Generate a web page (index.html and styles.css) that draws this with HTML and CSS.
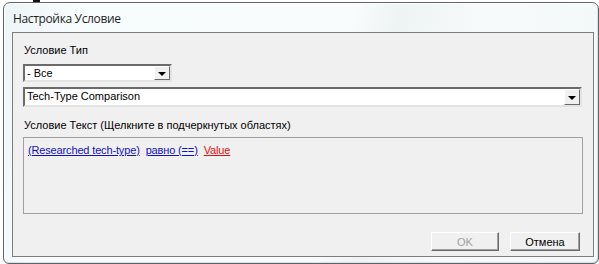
FILE: index.html
```html
<!DOCTYPE html>
<html>
<head>
<meta charset="utf-8">
<link rel="stylesheet" href="styles.css">
</head>
<body>
<div class="mark"></div>
<div class="window">
  <div class="titlebar">Настройка Условие</div>
  <div class="client">
    <div class="label label-type">Условие Тип</div>
    <div class="combo combo-small">
      <span class="combo-text">- Все</span>
      <span class="combo-btn"><span class="arrow"></span></span>
    </div>
    <div class="combo combo-wide">
      <span class="combo-text">Tech-Type Comparison</span>
      <span class="combo-btn"><span class="arrow"></span></span>
    </div>
    <div class="label label-text">Условие Текст (Щелкните в подчеркнутых областях)</div>
    <div class="textbox">
      <a class="link">(Researched tech-type)</a>
      <a class="link">равно (==)</a>
      <a class="link link-red">Value</a>
    </div>
    <div class="buttons">
      <button class="btn btn-disabled">OK</button>
      <button class="btn">Отмена</button>
    </div>
  </div>
</div>
</body>
</html>
```

FILE: styles.css
```css
html, body {
  margin: 0;
  padding: 0;
  background: #ffffff;
}
body {
  padding: 2px 0 0 3px;
  font-family: "Liberation Sans", Arial, sans-serif;
  font-size: 11px;
  color: #000;
}
.mark {
  position: absolute;
  left: 33px;
  top: 0;
  width: 7px;
  height: 2px;
  background: #111;
}
.window {
  box-sizing: border-box;
  width: 596px;
  height: 262px;
  border: 1px solid #5f6366;
  border-radius: 7px 7px 6px 6px;
  background: linear-gradient(100deg, #eef5f7 0%, #f7fcfd 12%, #f8fcfd 55%, #eef3f4 62%, #f6fafb 75%, #f3f8f9 100%);
  box-shadow: inset 1px 1px 0 #ffffff, inset -1px -1px 0 #d9e2e6;
  padding: 0 4px 6px 8px;
  display: flex;
  flex-direction: column;
}
.titlebar {
  height: 29px;
  box-sizing: border-box;
  padding: 7px 0 0 1px;
  font-family: "Open Sans", "Noto Sans", sans-serif;
  font-size: 12px;
  color: #1e1e1e;
  letter-spacing: -0.35px;
}
.client {
  flex: 1;
  border: 1px solid #7e7e7e;
  background: #f0f0f0;
  padding: 0 10px;
  display: flex;
  flex-direction: column;
}
.label {
  height: 13px;
  line-height: 13px;
  padding-left: 1px;
}
.label-type {
  margin-top: 11px;
}
.combo {
  box-sizing: border-box;
  background: #ffffff;
  border-style: solid;
  border-width: 2px;
  border-color: #6b6b6b #e3e3e3 #e3e3e3 #6b6b6b;
  display: flex;
  align-items: stretch;
}
.combo-small {
  width: 149px;
  height: 18px;
  margin-top: 7px;
}
.combo-wide {
  height: 20px;
  margin-top: 5px;
  width: 559px;
}
.combo-text {
  flex: 1;
  padding-left: 2px;
  line-height: 14px;
  white-space: nowrap;
}
.combo-wide .combo-text {
  line-height: 15px;
}
.combo-btn {
  width: 16px;
  box-sizing: border-box;
  background: #f0f0f0;
  border-style: solid;
  border-width: 1px;
  border-color: #ffffff #6b6b6b #6b6b6b #ffffff;
  display: flex;
  align-items: center;
  justify-content: center;
}
.arrow {
  width: 0;
  height: 0;
  border-left: 4px solid transparent;
  border-right: 4px solid transparent;
  border-top: 4px solid #000;
  margin-top: 1px;
}
.label-text {
  margin-top: 12px;
}
.textbox {
  box-sizing: border-box;
  height: 77px;
  margin-top: 5px;
  border: 1px solid #a0a0a0;
  padding: 6px 0 0 4px;
  display: flex;
  align-items: flex-start;
  gap: 6px;
  line-height: 13px;
  letter-spacing: -0.15px;
}
.link {
  color: #1010c8;
  text-decoration: underline;
}
.link-red {
  color: #e01010;
}
.buttons {
  margin-top: 18px;
  display: flex;
  justify-content: flex-end;
  gap: 11px;
  padding-right: 3px;
}
.btn {
  box-sizing: border-box;
  height: 19px;
  padding: 0;
  font-family: "Liberation Sans", Arial, sans-serif;
  font-size: 11px;
  background: #f0f0f0;
  color: #000;
  border-style: solid;
  border-width: 1px;
  border-color: #ffffff #696969 #696969 #ffffff;
  box-shadow: inset -1px -1px 0 #a0a0a0;
}
.btn:first-child {
  width: 68px;
}
.btn:last-child {
  width: 70px;
}
.btn-disabled {
  color: #a0a0a0;
}
```
